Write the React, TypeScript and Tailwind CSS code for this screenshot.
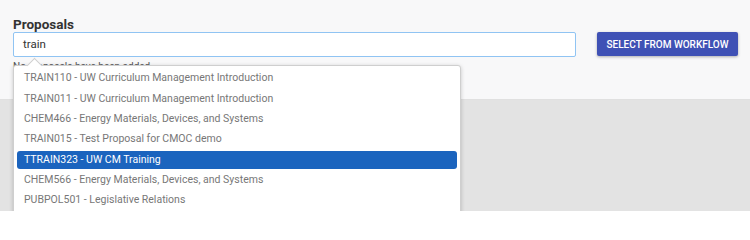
const items = [
  "TRAIN110 - UW Curriculum Management Introduction",
  "TRAIN011 - UW Curriculum Management Introduction",
  "CHEM466 - Energy Materials, Devices, and Systems",
  "TRAIN015 - Test Proposal for CMOC demo",
  "TTRAIN323 - UW CM Training",
  "CHEM566 - Energy Materials, Devices, and Systems",
  "PUBPOL501 - Legislative Relations",
];

const App = () => {
  return (
    <div className="relative h-[211px] w-[750px] overflow-hidden bg-[#e3e3e3] font-['Roboto',sans-serif]">
      <div className="flex h-[100px] border-b border-[#e0e0e0] bg-[#f8f8f9] pl-[13px] pt-[16px]">
        <div className="relative w-[563px]">
          <div className="text-[13.5px] font-bold leading-[16px] text-[#333]">Proposals</div>
          <div className="flex h-[25px] items-center rounded-[2px] border border-[#90c4f3] bg-white px-[9px] text-[11.5px] text-[#333]">
            train
          </div>
          <div className="mt-[3px] text-[10px] leading-[13px] text-[#555]">No proposals have been added</div>

          <div className="absolute left-0 top-[49px] w-[448px] rounded-[3px] border border-[#cfcfcf] bg-white px-[3px] pb-[20px] pt-[3px] shadow-[0_1px_4px_rgba(0,0,0,0.2)]">
            <div className="absolute left-[15px] top-[-6px] h-[11px] w-[11px] rotate-45 border-l border-t border-[#cfcfcf] bg-white" />
            <div className="relative flex flex-col gap-[2.4px]">
              {items.map((item, i) => (
                <div
                  key={item}
                  className={
                    i === 4
                      ? "flex h-[18px] items-center rounded-[3px] bg-[#1b64be] px-[7px] text-[10.5px] text-white"
                      : "flex h-[18px] items-center px-[7px] text-[10.5px] text-[#777]"
                  }
                >
                  {item}
                </div>
              ))}
            </div>
          </div>
        </div>

        <button className="ml-[21px] mt-[16px] h-[24px] w-[141px] rounded-[2px] bg-[#3f51b5] text-[10px] font-medium text-white shadow-[0_1px_3px_rgba(0,0,0,0.3)]">
          SELECT FROM WORKFLOW
        </button>
      </div>
    </div>
  );
};

export default App;
